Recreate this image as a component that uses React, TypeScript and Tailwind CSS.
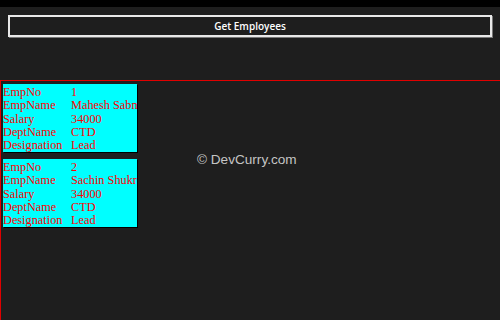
const employees = [
  { EmpNo: '1', EmpName: 'Mahesh Sabnis', Salary: '34000', DeptName: 'CTD', Designation: 'Lead' },
  { EmpNo: '2', EmpName: 'Sachin Shukre', Salary: '34000', DeptName: 'CTD', Designation: 'Lead' },
]

const fields = ['EmpNo', 'EmpName', 'Salary', 'DeptName', 'Designation'] as const

function EmployeeCard({ emp }: { emp: (typeof employees)[number] }) {
  return (
    <div className="w-[134px] h-[68px] overflow-hidden bg-[#00ffff] shadow-[1px_1px_0_#000] pt-[2px]">
      {fields.map((f) => (
        <div key={f} className="flex whitespace-nowrap text-[12.3px] leading-[13.3px] text-[#ff0000]">
          <span className="w-[68px] shrink-0">{f}</span>
          <span>{emp[f]}</span>
        </div>
      ))}
    </div>
  )
}

export default function App() {
  return (
    <div className="relative w-[500px] h-[320px] overflow-hidden bg-[#1e1e1e] flex flex-col font-['Liberation_Serif',serif]">
      <div className="h-[7px] shrink-0 bg-black" />
      <div className="mx-[8px] mt-[8px] h-[22px] shrink-0 border-2 border-[#e8e8e8] shadow-[1px_1px_0_#777] flex items-center justify-center">
        <span className="font-['Open_Sans',sans-serif] font-semibold text-[10px] text-white">Get Employees</span>
      </div>
      <div className="mt-[43px] flex-1 border-t-[1.5px] border-l-[1.5px] border-[#e00000] pl-[2px] pt-[3px] flex flex-col gap-[7px]">
        {employees.map((e) => (
          <EmployeeCard key={e.EmpNo} emp={e} />
        ))}
      </div>
      <div className="absolute left-[197px] top-[150px] font-['Liberation_Sans',sans-serif] text-[13.6px] text-[#c4c4c4]">
        © DevCurry.com
      </div>
    </div>
  )
}
